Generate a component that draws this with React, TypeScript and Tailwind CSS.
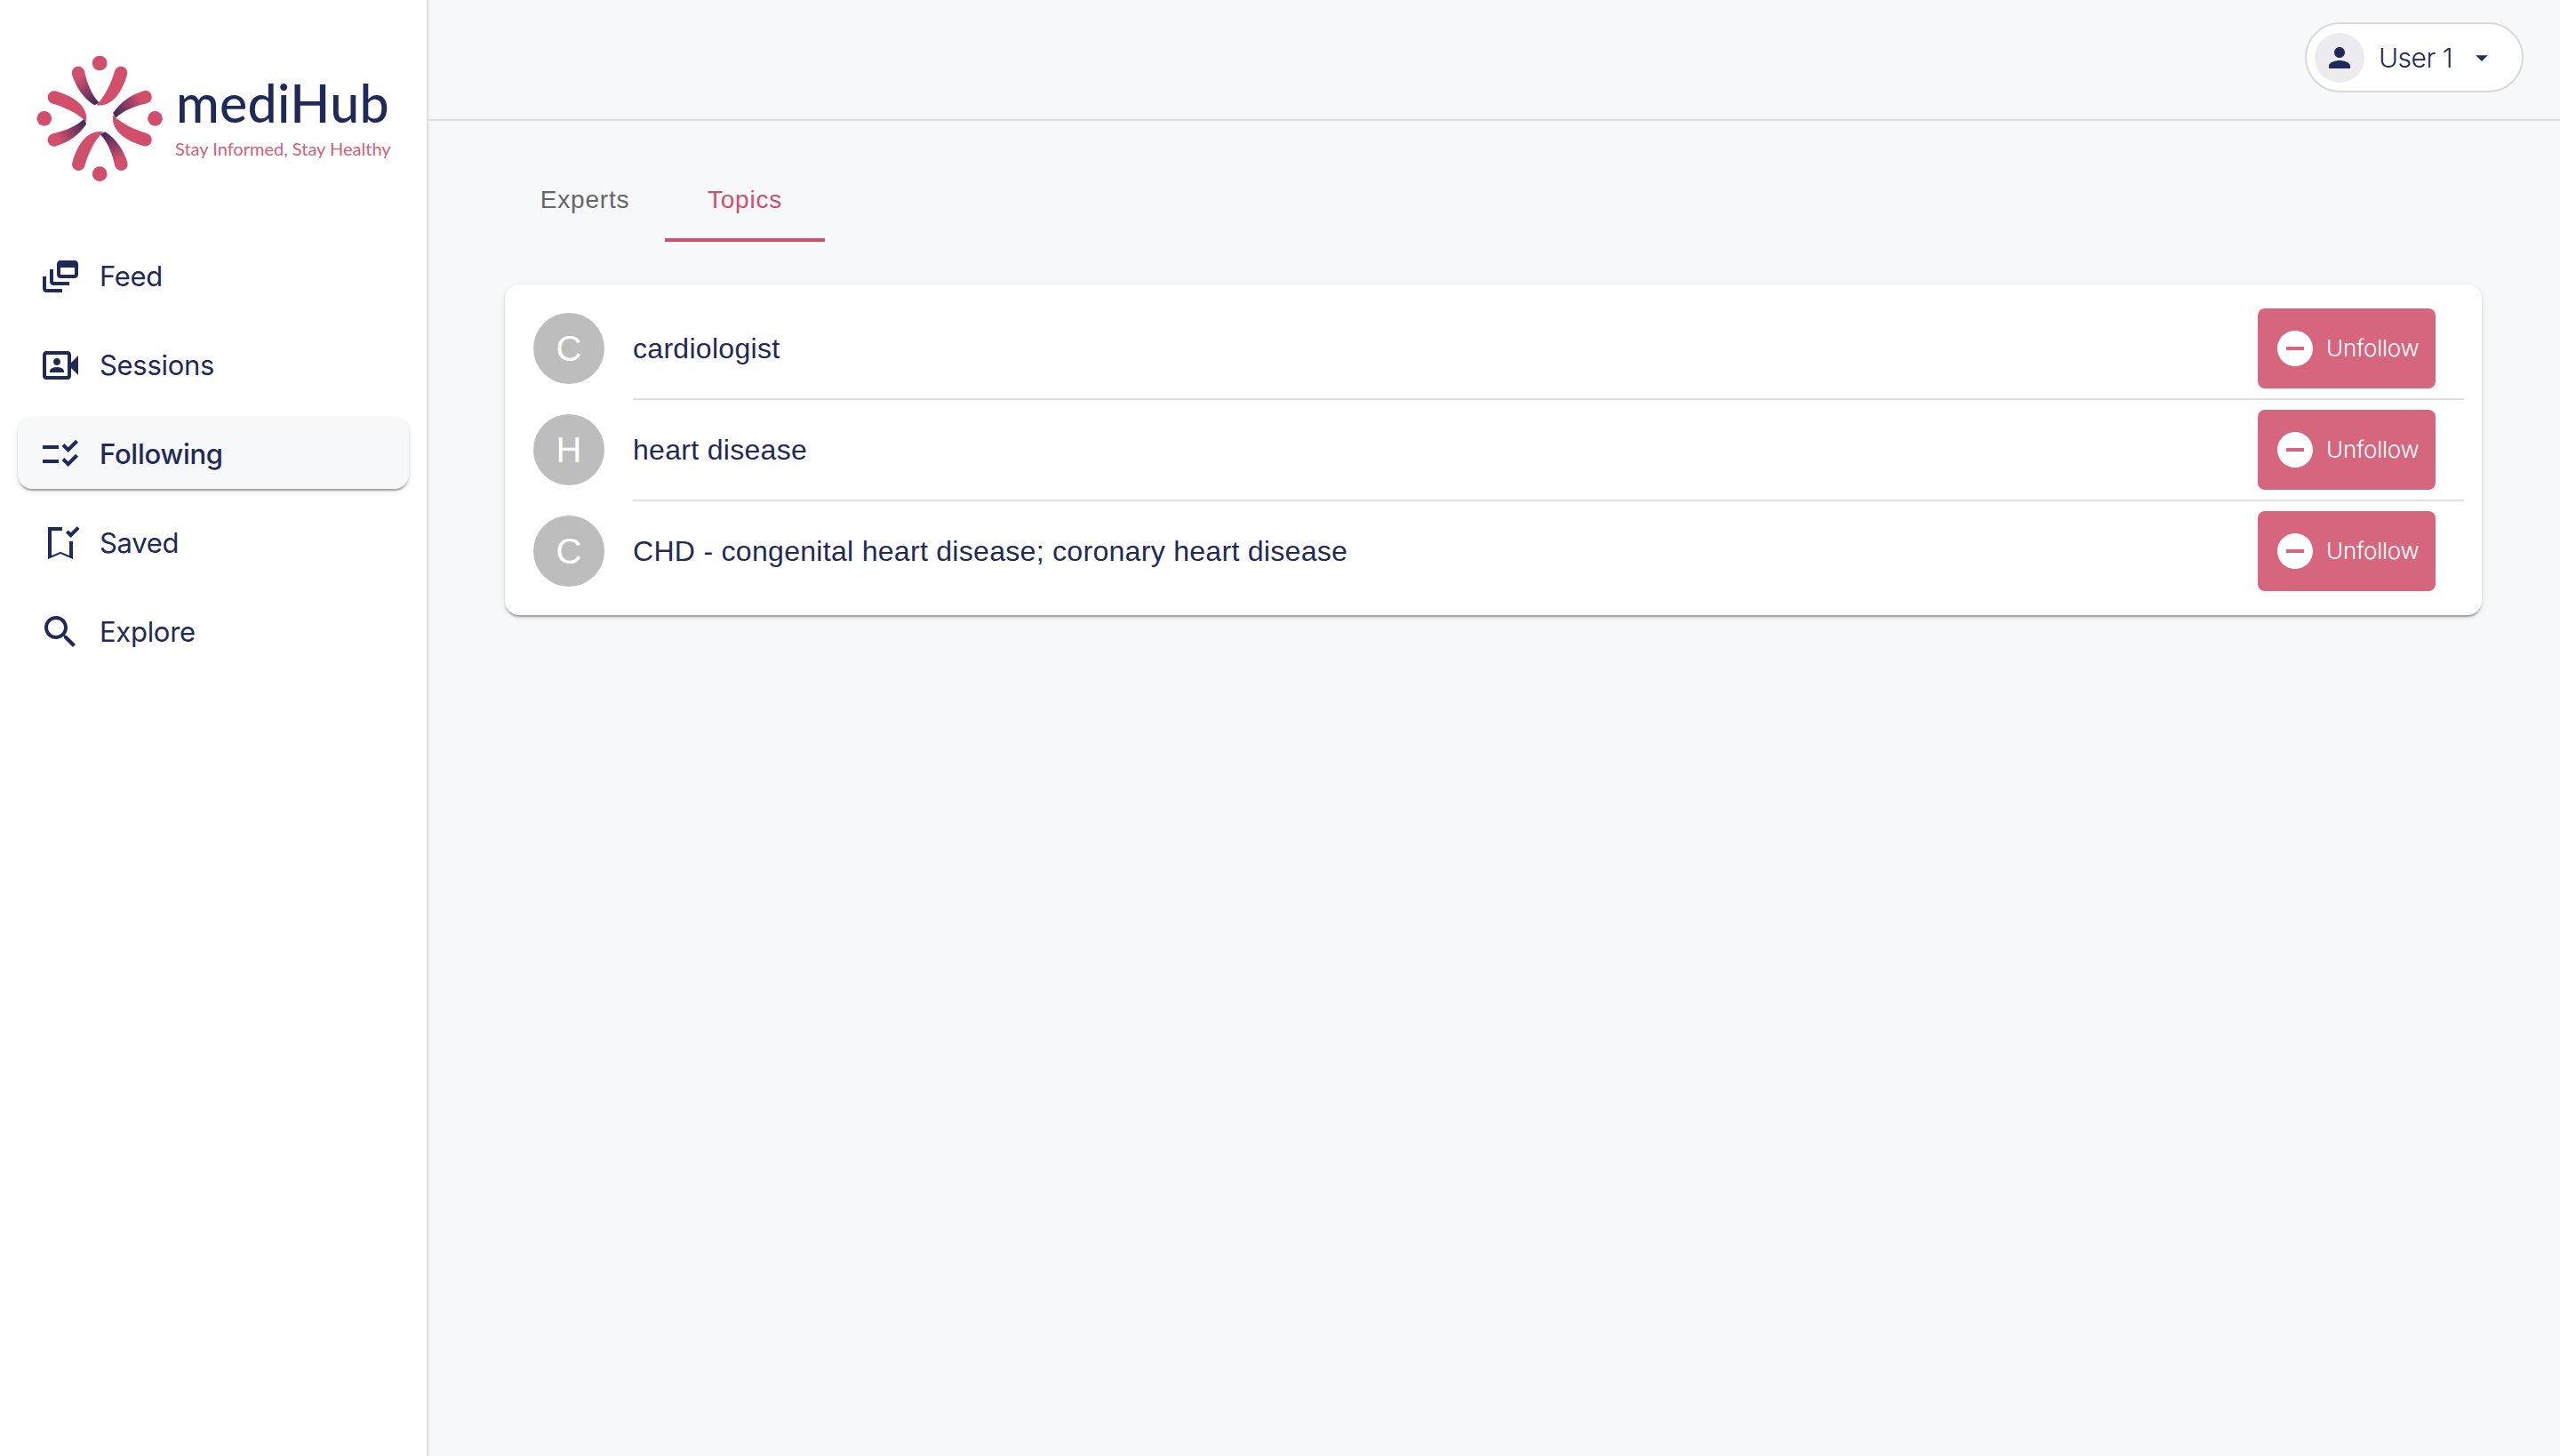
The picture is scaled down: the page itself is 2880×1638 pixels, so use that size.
import React from 'react';

// Material icon paths, 24x24 grid
const ICONS = {
  feed: 'M8 8H6v7c0 1.1.9 2 2 2h9v-2H8V8z M20 3h-8c-1.1 0-2 .9-2 2v6c0 1.1.9 2 2 2h8c1.1 0 2-.9 2-2V5c0-1.1-.9-2-2-2zm0 8h-8V7h8v4z M4 12H2v7c0 1.1.9 2 2 2h9v-2H4v-7z',
  sessions:
    'M18 10.48V6c0-1.1-.9-2-2-2H4c-1.1 0-2 .9-2 2v12c0 1.1.9 2 2 2h12c1.1 0 2-.9 2-2v-4.48l4 3.98v-11l-4 3.98zm-2-.79V18H4V6h12v3.69z M10 12c1.1 0 2-.9 2-2s-.9-2-2-2-2 .9-2 2 .9 2 2 2z M14 15.43c0-.81-.48-1.53-1.22-1.85-.85-.37-1.79-.58-2.78-.58-.99 0-1.93.21-2.78.58C6.48 13.9 6 14.62 6 15.43V16h8v-.57z',
  following:
    'M11 7H2v2h9V7zm0 8H2v2h9v-2zm5.34-4L12.8 7.46l1.41-1.41 2.12 2.12 4.24-4.24L22 5.34 16.34 11zm0 8-3.54-3.54 1.41-1.41 2.12 2.12 4.24-4.24L22 13.34 16.34 19z',
  saved:
    'M17 18.97V11h2v10l-7-3-7 3V3h8v2H7v13.97l5-2.14 5 2.14zM17.83 9 15 6.17l1.41-1.41 1.41 1.41 3.54-3.54 1.41 1.41L17.83 9z',
  explore:
    'M15.5 14h-.79l-.28-.27C15.41 12.59 16 11.11 16 9.5 16 5.91 13.09 3 9.5 3S3 5.91 3 9.5 5.91 16 9.5 16c1.61 0 3.09-.59 4.23-1.57l.27.28v.79l5 4.99L20.49 19l-4.99-5zm-6 0C7.01 14 5 11.99 5 9.5S7.01 5 9.5 5 14 7.01 14 9.5 11.99 14 9.5 14z',
};

const NAV_ITEMS = [
  { label: 'Feed', icon: ICONS.feed },
  { label: 'Sessions', icon: ICONS.sessions },
  { label: 'Following', icon: ICONS.following, active: true },
  { label: 'Saved', icon: ICONS.saved },
  { label: 'Explore', icon: ICONS.explore },
];

const TOPICS = [
  { letter: 'C', name: 'cardiologist' },
  { letter: 'H', name: 'heart disease' },
  { letter: 'C', name: 'CHD - congenital heart disease; coronary heart disease' },
];

const Icon = ({ d, className }: { d: string; className: string }) => (
  <svg viewBox="0 0 24 24" fill="currentColor" className={className}>
    <path d={d} />
  </svg>
);

const LogoMark = () => (
  <svg viewBox="0 0 510 510" className="w-[170px] h-[170px] shrink-0">
    <defs>
      <linearGradient id="arm" gradientUnits="userSpaceOnUse" x1="175" y1="115" x2="225" y2="200">
        <stop offset="0" stopColor="#d14f6b" />
        <stop offset="1" stopColor="#47295c" />
      </linearGradient>
    </defs>
    {[0, 90, 180, 270].map((angle) => (
      <g key={angle} transform={`rotate(${angle} 246.5 250)`}>
        <circle cx="246.5" cy="63" r="25" fill="#d14f6b" />
        <path
          d="M153 102 C167 145 190 180 228 205 L245 197 C220 170 205 135 195 90 A21.5 21.5 0 0 0 153 102 Z"
          fill="url(#arm)"
        />
        <path
          d="M297 90 C285 130 268 170 235 205 C280 212 318 175 339 102 A21.5 21.5 0 0 0 297 90 Z"
          fill="#d14f6b"
        />
      </g>
    ))}
  </svg>
);

const Sidebar = () => (
  <aside className="relative z-10 w-[482px] shrink-0 h-full bg-white border-r-2 border-[#e0e0e3] shadow-[1px_0_2px_rgba(0,0,0,0.04)] flex flex-col">
    <div className="h-[270px] pt-[50px] pl-[30px] flex items-start">
      <LogoMark />
      <div className="flex flex-col pt-[30px] -ml-[3px] font-['Lato',sans-serif]">
        <div className="text-[59px] leading-[72px] font-medium tracking-[0.3px] pl-[1px] text-[#1f2a5a]">mediHub</div>
        <div className="text-[20px] leading-[24px] mt-[3px] font-normal text-[#d2607a]">Stay Informed, Stay Healthy</div>
      </div>
    </div>
    <nav className="flex flex-col gap-[20px] px-[20px]">
      {NAV_ITEMS.map((item) => (
        <div
          key={item.label}
          className={
            item.active
              ? 'h-[80px] flex items-center pl-[24px] rounded-[16px] bg-[#f7f8fa] shadow-[0_4px_2px_-2px_rgba(0,0,0,0.2),0_2px_2px_0_rgba(0,0,0,0.14),0_2px_6px_0_rgba(0,0,0,0.12)] text-[#1f2a5a]'
              : 'h-[80px] flex items-center pl-[24px] rounded-[16px] text-[#1f2a5a]'
          }
        >
          <Icon d={item.icon} className="w-[48px] h-[48px] shrink-0 translate-y-[1px]" />
          <span
            className={
              item.active
                ? "ml-[20px] pt-[2px] text-[31px] tracking-[-0.25px] font-medium font-['Inter',sans-serif]"
                : "ml-[20px] pt-[2px] text-[31px] tracking-[-0.3px] font-normal font-['Inter',sans-serif]"
            }
          >
            {item.label}
          </span>
        </div>
      ))}
    </nav>
  </aside>
);

const Header = () => (
  <header className="h-[136px] shrink-0 border-b-2 border-[#dcdde0] flex items-start justify-end pt-[25px] pr-[41px]">
    <div className="w-[246px] h-[79px] rounded-full bg-white border-2 border-[#d8d8de] flex items-center pl-[9px] text-[#1f2a5a]">
      <div className="w-[56px] h-[56px] rounded-full bg-[#ecebef] flex items-center justify-center">
        <Icon
          d="M12 12c2.21 0 4-1.79 4-4s-1.79-4-4-4-4 1.79-4 4 1.79 4 4 4zm0 2c-2.67 0-8 1.34-8 4v2h16v-2c0-2.66-5.33-4-8-4z"
          className="w-[36px] h-[36px]"
        />
      </div>
      <span className="ml-[16px] pt-[2px] text-[30px] tracking-[-0.5px] font-light font-['Inter',sans-serif]">User 1</span>
      <Icon d="M7 10l5 5 5-5z" className="w-[32px] h-[32px] ml-[17px]" />
    </div>
  </header>
);

const TopicRow = ({ letter, name, last }: { letter: string; name: string; last: boolean }) => (
  <div>
    <div className="h-[112px] flex items-center pl-[32px] pr-[52px]">
      <div className="w-[80px] h-[80px] rounded-full bg-[#bdbdbd] text-white flex items-center justify-center text-[40px] font-['Liberation_Sans',sans-serif]">
        {letter}
      </div>
      <div className="ml-[32px] flex-1 text-[32px] tracking-[0.3px] text-[#1f2a5a] font-['Liberation_Sans',sans-serif]">
        {name}
      </div>
      <button className="w-[200px] h-[90px] rounded-[8px] bg-[#d5667e] text-white flex items-center pl-[18px] font-['Inter',sans-serif]">
        <Icon
          d="M12 2C6.48 2 2 6.48 2 12s4.48 10 10 10 10-4.48 10-10S17.52 2 12 2zm5 11H7v-2h10v2z"
          className="w-[48px] h-[48px]"
        />
        <span className="ml-[11px] pb-[2px] text-[26px] font-[350] tracking-[-0.25px]">Unfollow</span>
      </button>
    </div>
    {!last && <div className="h-[2px] ml-[144px] mr-[20px] bg-[#e0e0e0]" />}
  </div>
);

export default function App() {
  return (
    <div className="flex w-full h-screen bg-[#f7f8fa] overflow-hidden">
      <Sidebar />
      <main className="flex-1 flex flex-col min-w-0">
        <Header />
        <div className="pl-[86px] pr-[88px] pt-[40px]">
          {/* Tabs */}
          <div className="flex h-[96px] font-['Liberation_Sans',sans-serif] text-[28px] tracking-[0.8px]">
            <div className="w-[180px] flex items-center justify-center pt-[1px] text-[#666666]">Experts</div>
            <div className="w-[180px] flex items-center justify-center text-[#d14f6b] border-b-4 border-[#d14f6b] pt-[5px] box-border">
              Topics
            </div>
          </div>
          {/* Topic list */}
          <div className="mt-[48px] py-[16px] bg-white rounded-[16px] shadow-[0_4px_2px_-2px_rgba(0,0,0,0.2),0_2px_2px_0_rgba(0,0,0,0.14),0_2px_6px_0_rgba(0,0,0,0.12)]">
            {TOPICS.map((topic, i) => (
              <TopicRow key={i} letter={topic.letter} name={topic.name} last={i === TOPICS.length - 1} />
            ))}
          </div>
        </div>
      </main>
    </div>
  );
}
